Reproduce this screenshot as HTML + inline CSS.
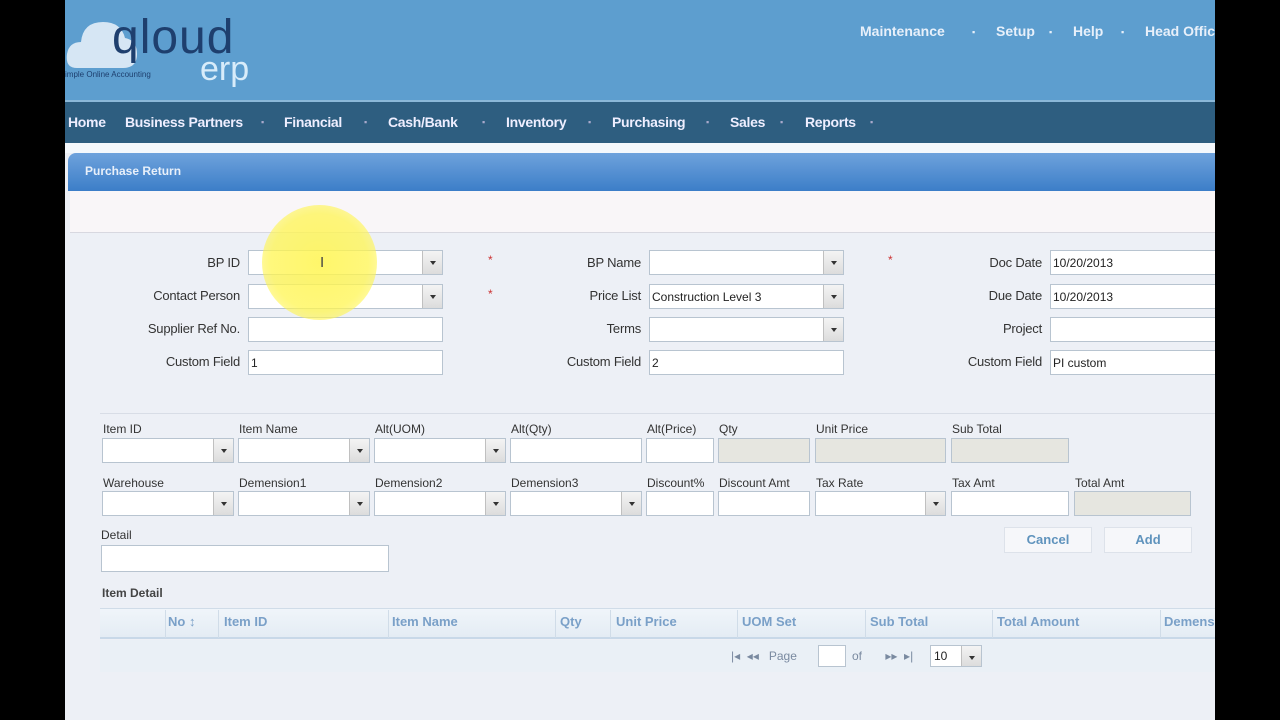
<!DOCTYPE html>
<html><head><meta charset="utf-8"><style>
*{margin:0;padding:0;box-sizing:border-box}
body{width:1280px;height:720px;background:#000;position:relative;overflow:hidden;font-family:"Liberation Sans",sans-serif}
.a{position:absolute}
.lbl{position:absolute;font-size:12px;color:#333;white-space:nowrap}
.f .lbl{font-size:13px;letter-spacing:-0.2px}
.r{text-align:right}
.in{position:absolute;background:#fff;border:1px solid #b8c4d0;height:25px;font-size:12px;color:#222;padding:5px 2px}
.g{background:#e6e6e0}
.dd{position:absolute;right:0;top:0;width:20px;height:23px;background:linear-gradient(#f4f4f4,#dcdcdc);border-left:1px solid #c0c0c0}
.dd:after{content:"";position:absolute;left:7px;top:10px;border:3px solid transparent;border-top:4px solid #333}
.nav{position:absolute;color:#eef;font-size:14px;font-weight:bold;top:114px;white-space:nowrap;letter-spacing:-0.3px}
.b{position:absolute;color:#aac;font-size:9px;top:117px}
.top{position:absolute;top:23px;font-size:14px;font-weight:bold;color:#e8f0fa;white-space:nowrap}
.th{position:absolute;top:614px;font-size:13px;font-weight:bold;color:#7aa0c8}
.sep{position:absolute;top:610px;width:1px;height:28px;background:#d0dce8}
</style></head><body>
<div class="a" style="left:65px;top:0;width:1150px;height:720px;background:#eceff5"></div>
<div class="a" style="left:65px;top:0;width:1150px;height:100px;background:#5d9ecf"></div>
<svg class="a" style="left:65px;top:12px" width="80" height="60"><path d="M12 56 Q0 56 2 42 Q4 30 16 30 Q18 10 38 10 Q56 10 60 26 Q72 28 72 42 Q72 56 58 56Z" fill="#d6e6f4"/></svg>
<div class="a" style="left:112px;top:12px;font-size:48px;color:#1e3f6e;letter-spacing:1px;line-height:52px">qloud</div>
<div class="a" style="left:200px;top:50px;font-size:34px;color:#d8ecfa;line-height:38px">erp</div>
<div class="a" style="left:65px;top:70px;font-size:8px;color:#1e3f6e">imple Online Accounting</div>
<div class="top" style="left:860px">Maintenance</div>
<div class="top" style="left:972px;font-size:9px;top:27px">▪</div>
<div class="top" style="left:996px">Setup</div>
<div class="top" style="left:1049px;font-size:9px;top:27px">▪</div>
<div class="top" style="left:1073px">Help</div>
<div class="top" style="left:1121px;font-size:9px;top:27px">▪</div>
<div class="top" style="left:1145px">Head Office</div>
<div class="a" style="left:65px;top:100px;width:1150px;height:43px;background:#2e5e80;border-top:2px solid #8bb8d8"></div>
<div class="nav" style="left:68px">Home</div>
<div class="nav" style="left:125px">Business Partners</div><div class="b" style="left:261px">▪</div>
<div class="nav" style="left:284px">Financial</div><div class="b" style="left:364px">▪</div>
<div class="nav" style="left:388px">Cash/Bank</div><div class="b" style="left:482px">▪</div>
<div class="nav" style="left:506px">Inventory</div><div class="b" style="left:588px">▪</div>
<div class="nav" style="left:612px">Purchasing</div><div class="b" style="left:706px">▪</div>
<div class="nav" style="left:730px">Sales</div><div class="b" style="left:780px">▪</div>
<div class="nav" style="left:805px">Reports</div><div class="b" style="left:870px">▪</div>
<div class="a" style="left:65px;top:143px;width:1150px;height:10px;background:#f4f8fc"></div>
<div class="a" style="left:68px;top:153px;width:1147px;height:38px;background:linear-gradient(#6ea2dc,#3c7ec8);border-radius:8px 0 0 0"></div>
<div class="a" style="left:85px;top:164px;font-size:12px;font-weight:bold;color:#e8f0fa">Purchase Return</div>
<div class="a" style="left:70px;top:191px;width:1145px;height:42px;background:#f9f6f8;border-bottom:1px solid #d8d8e0"></div>
<div class="a" style="left:70px;top:233px;width:1145px;height:487px;background:#edf0f6"></div>
<div class="a" style="left:100px;top:413px;width:1115px;height:1px;background:#d8dde6"></div>

<div class="f">
<div class="lbl r" style="left:100px;width:140px;top:255px">BP ID</div>
<div class="lbl r" style="left:100px;width:140px;top:288px">Contact Person</div>
<div class="lbl r" style="left:100px;width:140px;top:321px">Supplier Ref No.</div>
<div class="lbl r" style="left:100px;width:140px;top:354px">Custom Field</div>
<div class="lbl r" style="left:500px;width:141px;top:255px">BP Name</div>
<div class="lbl r" style="left:500px;width:141px;top:288px">Price List</div>
<div class="lbl r" style="left:500px;width:141px;top:321px">Terms</div>
<div class="lbl r" style="left:500px;width:141px;top:354px">Custom Field</div>
<div class="lbl r" style="left:900px;width:142px;top:255px">Doc Date</div>
<div class="lbl r" style="left:900px;width:142px;top:288px">Due Date</div>
<div class="lbl r" style="left:900px;width:142px;top:321px">Project</div>
<div class="lbl r" style="left:900px;width:142px;top:354px">Custom Field</div>
</div>
<div class="in" style="left:248px;top:250px;width:195px"><div class="dd"></div></div>
<div class="in" style="left:248px;top:284px;width:195px"><div class="dd"></div></div>
<div class="in" style="left:248px;top:317px;width:195px"></div>
<div class="in" style="left:248px;top:350px;width:195px">1</div>
<div class="lbl" style="left:488px;top:253px;color:#c33">*</div>
<div class="lbl" style="left:488px;top:287px;color:#c33">*</div>
<div class="lbl" style="left:888px;top:253px;color:#c33">*</div>
<div class="in" style="left:649px;top:250px;width:195px"><div class="dd"></div></div>
<div class="in" style="left:649px;top:284px;width:195px">Construction Level 3<div class="dd"></div></div>
<div class="in" style="left:649px;top:317px;width:195px"><div class="dd"></div></div>
<div class="in" style="left:649px;top:350px;width:195px">2</div>
<div class="in" style="left:1050px;top:250px;width:170px">10/20/2013</div>
<div class="in" style="left:1050px;top:284px;width:170px">10/20/2013</div>
<div class="in" style="left:1050px;top:317px;width:170px"></div>
<div class="in" style="left:1050px;top:350px;width:170px">PI custom</div>

<div class="lbl" style="left:103px;top:422px">Item ID</div>
<div class="lbl" style="left:239px;top:422px">Item Name</div>
<div class="lbl" style="left:375px;top:422px">Alt(UOM)</div>
<div class="lbl" style="left:511px;top:422px">Alt(Qty)</div>
<div class="lbl" style="left:647px;top:422px">Alt(Price)</div>
<div class="lbl" style="left:719px;top:422px">Qty</div>
<div class="lbl" style="left:816px;top:422px">Unit Price</div>
<div class="lbl" style="left:952px;top:422px">Sub Total</div>
<div class="in" style="left:102px;top:438px;width:132px"><div class="dd"></div></div>
<div class="in" style="left:238px;top:438px;width:132px"><div class="dd"></div></div>
<div class="in" style="left:374px;top:438px;width:132px"><div class="dd"></div></div>
<div class="in" style="left:510px;top:438px;width:132px"></div>
<div class="in" style="left:646px;top:438px;width:68px"></div>
<div class="in g" style="left:718px;top:438px;width:92px"></div>
<div class="in g" style="left:815px;top:438px;width:131px"></div>
<div class="in g" style="left:951px;top:438px;width:118px"></div>

<div class="lbl" style="left:103px;top:476px">Warehouse</div>
<div class="lbl" style="left:239px;top:476px">Demension1</div>
<div class="lbl" style="left:375px;top:476px">Demension2</div>
<div class="lbl" style="left:511px;top:476px">Demension3</div>
<div class="lbl" style="left:647px;top:476px">Discount%</div>
<div class="lbl" style="left:719px;top:476px">Discount Amt</div>
<div class="lbl" style="left:816px;top:476px">Tax Rate</div>
<div class="lbl" style="left:952px;top:476px">Tax Amt</div>
<div class="lbl" style="left:1075px;top:476px">Total Amt</div>
<div class="in" style="left:102px;top:491px;width:132px"><div class="dd"></div></div>
<div class="in" style="left:238px;top:491px;width:132px"><div class="dd"></div></div>
<div class="in" style="left:374px;top:491px;width:132px"><div class="dd"></div></div>
<div class="in" style="left:510px;top:491px;width:132px"><div class="dd"></div></div>
<div class="in" style="left:646px;top:491px;width:68px"></div>
<div class="in" style="left:718px;top:491px;width:92px"></div>
<div class="in" style="left:815px;top:491px;width:131px"><div class="dd"></div></div>
<div class="in" style="left:951px;top:491px;width:118px"></div>
<div class="in g" style="left:1074px;top:491px;width:117px"></div>

<div class="lbl" style="left:101px;top:528px">Detail</div>
<div class="in" style="left:101px;top:545px;width:288px;height:27px"></div>
<div class="a" style="left:1004px;top:527px;width:88px;height:26px;background:#f6f7fa;border:1px solid #dde2ea;font-size:13px;font-weight:bold;color:#5f93bd;text-align:center;line-height:24px">Cancel</div>
<div class="a" style="left:1104px;top:527px;width:88px;height:26px;background:#f6f7fa;border:1px solid #dde2ea;font-size:13px;font-weight:bold;color:#5f93bd;text-align:center;line-height:24px">Add</div>

<div class="lbl" style="left:102px;top:586px;font-weight:bold;color:#444">Item Detail</div>
<div class="a" style="left:100px;top:608px;width:1115px;height:31px;background:linear-gradient(#f0f5fa,#e4ecf4);border-top:1px solid #d0dce8;border-bottom:2px solid #c8d8e8"></div>
<div class="sep" style="left:165px"></div><div class="sep" style="left:218px"></div><div class="sep" style="left:388px"></div><div class="sep" style="left:555px"></div><div class="sep" style="left:610px"></div><div class="sep" style="left:737px"></div><div class="sep" style="left:865px"></div><div class="sep" style="left:992px"></div><div class="sep" style="left:1160px"></div>
<div class="th" style="left:168px">No ↕</div>
<div class="th" style="left:224px">Item ID</div>
<div class="th" style="left:392px">Item Name</div>
<div class="th" style="left:560px">Qty</div>
<div class="th" style="left:616px">Unit Price</div>
<div class="th" style="left:742px">UOM Set</div>
<div class="th" style="left:870px">Sub Total</div>
<div class="th" style="left:997px">Total Amount</div>
<div class="th" style="left:1164px">Demension</div>
<div class="a" style="left:100px;top:640px;width:1115px;height:32px;background:#eaf0f6"></div>
<div class="lbl" style="left:731px;top:649px;color:#7a8aa0">|◂ &nbsp;◂◂ &nbsp; Page</div>
<div class="in" style="left:818px;top:645px;width:28px;height:22px"></div>
<div class="lbl" style="left:852px;top:649px;color:#7a8aa0">of &nbsp;&nbsp;&nbsp;&nbsp;&nbsp; ▸▸ &nbsp;▸|</div>
<div class="in" style="left:930px;top:645px;width:52px;height:22px;padding:3px">10<div class="dd" style="height:20px"></div></div>

<div class="a" style="left:262px;top:205px;width:115px;height:115px;border-radius:50%;background:radial-gradient(rgba(255,245,80,.85),rgba(255,245,80,.75) 60%,rgba(255,245,80,.2))"></div>
<div class="a" style="left:320px;top:254px;font-size:15px;color:#444">I</div>
<div class="a" style="left:1215px;top:0;width:65px;height:720px;background:#000"></div>
</body></html>
